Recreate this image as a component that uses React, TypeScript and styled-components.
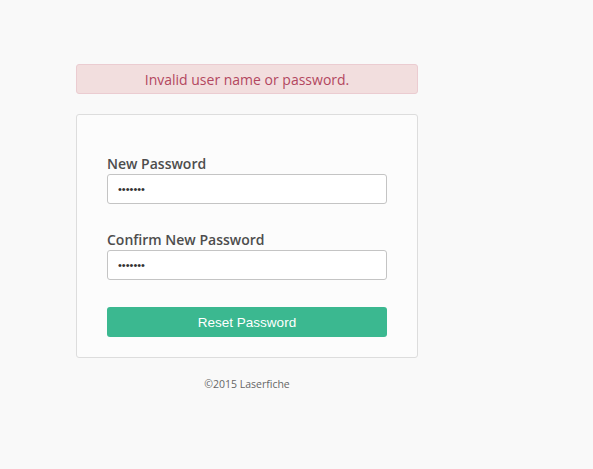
import styled, { createGlobalStyle } from 'styled-components';

const GlobalStyle = createGlobalStyle`
  html, body {
    margin: 0;
    background: #f9f9f9;
    font-family: "Open Sans", "Liberation Sans", sans-serif;
  }
`;

const Page = styled.div`
  padding: 64px 0 0 76px;
  min-height: 405px;
`;

const Column = styled.div`
  width: 342px;
  display: flex;
  flex-direction: column;
`;

const Alert = styled.div`
  box-sizing: border-box;
  height: 30px;
  background: #f2dede;
  border: 1px solid #ebccd1;
  border-radius: 3px;
  color: #b2475f;
  font-size: 14px;
  display: flex;
  align-items: center;
  justify-content: center;
  margin-bottom: 20px;
`;

const Card = styled.form`
  box-sizing: border-box;
  background: #fcfcfc;
  border: 1px solid #dddddd;
  border-radius: 3px;
  padding: 40px 30px 20px;
  display: flex;
  flex-direction: column;
`;

const Field = styled.div`
  display: flex;
  flex-direction: column;
  margin-bottom: 27px;
`;

const Label = styled.label`
  font-size: 14px;
  font-weight: 600;
  color: #4d4d4d;
  line-height: 18px;
  margin-bottom: 1px;
`;

const Input = styled.input`
  box-sizing: border-box;
  width: 280px;
  height: 30px;
  border: 1px solid #c4c4c4;
  border-radius: 3px;
  background: #ffffff;
  padding: 0 10px;
  font-size: 11px;
  color: #333;
  outline: none;
`;

const Button = styled.button`
  width: 280px;
  height: 30px;
  border: none;
  border-radius: 3px;
  background: #3bb890;
  color: #ffffff;
  font-family: "Liberation Sans", Arial, sans-serif;
  font-size: 13.5px;
  cursor: pointer;
`;

const Footer = styled.div`
  text-align: center;
  font-size: 10.5px;
  color: #666;
  margin-top: 19px;
`;

export default function App() {
  return (
    <>
      <GlobalStyle />
      <Page>
        <Column>
          <Alert>Invalid user name or password.</Alert>
          <Card onSubmit={(e) => e.preventDefault()}>
            <Field>
              <Label>New Password</Label>
              <Input type="password" defaultValue="1234567" />
            </Field>
            <Field>
              <Label>Confirm New Password</Label>
              <Input type="password" defaultValue="1234567" />
            </Field>
            <Button type="submit">Reset Password</Button>
          </Card>
          <Footer>©2015 Laserfiche</Footer>
        </Column>
      </Page>
    </>
  );
}
